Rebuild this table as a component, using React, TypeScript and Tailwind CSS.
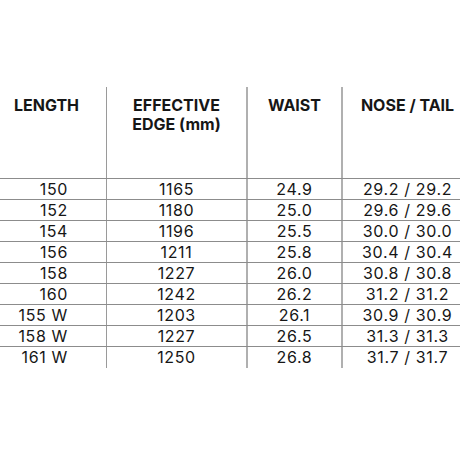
const rows = [
  ["150", "1165", "24.9", "29.2 / 29.2"],
  ["152", "1180", "25.0", "29.6 / 29.6"],
  ["154", "1196", "25.5", "30.0 / 30.0"],
  ["156", "1211", "25.8", "30.4 / 30.4"],
  ["158", "1227", "26.0", "30.8 / 30.8"],
  ["160", "1242", "26.2", "31.2 / 31.2"],
  ["155 W", "1203", "26.1", "30.9 / 30.9"],
  ["158 W", "1227", "26.5", "31.3 / 31.3"],
  ["161 W", "1250", "26.8", "31.7 / 31.7"],
];

const cols = "grid grid-cols-[106px_140px_95px_119px]";

export default function App() {
  return (
    <div
      className="w-[460px] h-[460px] bg-white text-[#161616] overflow-hidden pt-[87px]"
      style={{ fontFamily: "Inter, 'Noto Sans', sans-serif" }}
    >
      <div className={`${cols} h-[92px] border-b border-[#8c8c8c] text-[16px] font-bold leading-[19px]`}>
        <div className="pt-[9px] pr-[13px] text-center">LENGTH</div>
        <div className="pt-[9px] text-center border-l border-[#9a9a9a]">
          <div>EFFECTIVE</div>
          <div>EDGE (mm)</div>
        </div>
        <div className="pt-[9px] text-center border-l-2 border-[#b0b0b0]">WAIST</div>
        <div className="pt-[9px] pl-[12px] text-center border-l-2 border-[#b0b0b0] whitespace-nowrap">NOSE / TAIL</div>
      </div>
      {rows.map((r, i) => (
        <div
          key={i}
          className={`${cols} h-[21px] text-[16px] tracking-[0.04em] leading-[20px] ${i < rows.length - 1 ? "border-b border-[#8c8c8c]" : ""}`}
        >
          <div className="text-right pr-[38px]">{r[0]}</div>
          <div className="text-center border-l border-[#9a9a9a]">{r[1]}</div>
          <div className="text-center border-l-2 border-[#b0b0b0]">{r[2]}</div>
          <div className="text-center pl-[12px] border-l-2 border-[#b0b0b0] whitespace-nowrap">{r[3]}</div>
        </div>
      ))}
    </div>
  );
}
